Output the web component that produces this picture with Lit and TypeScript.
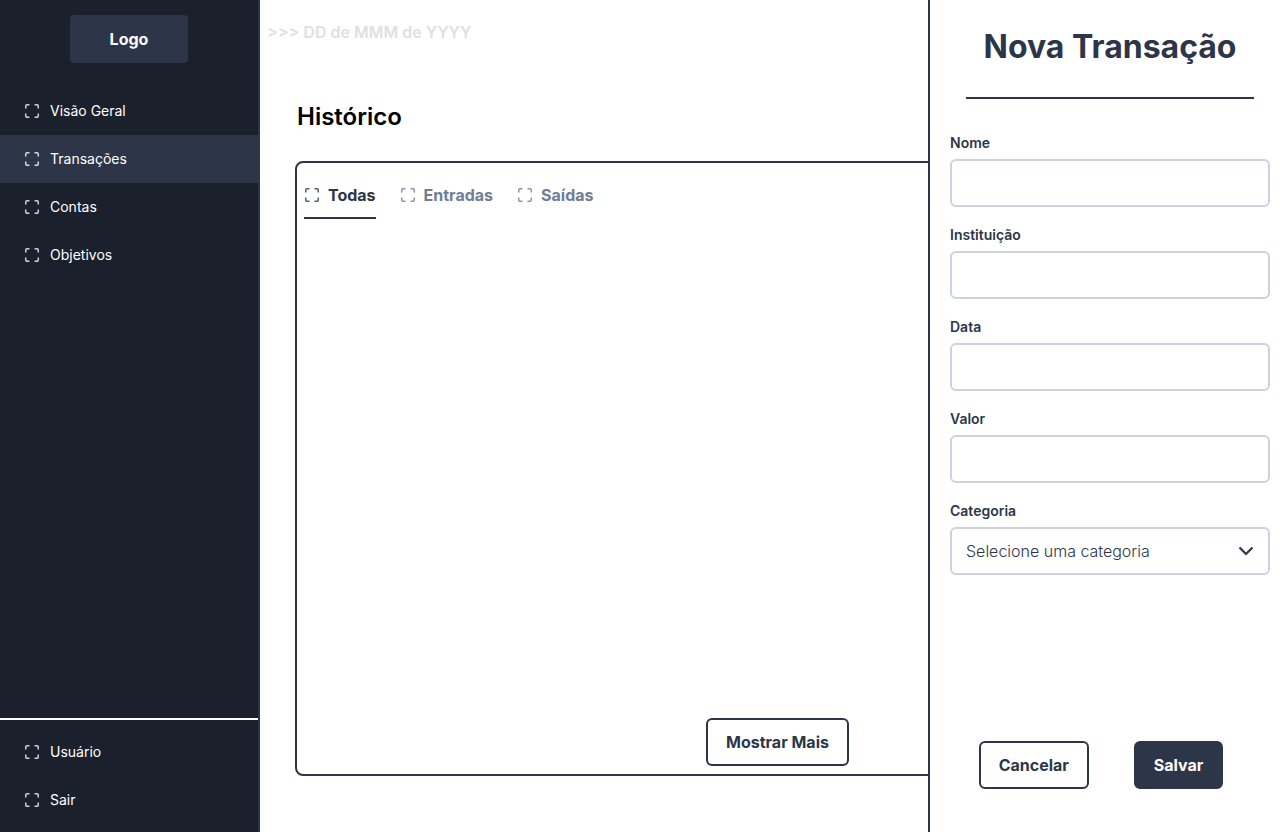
import { LitElement, html, css, svg } from "lit";
import { customElement, state } from "lit/decorators.js";
import { classMap } from "lit/directives/class-map.js";

const cornersIcon = html`
  <svg class="icon" viewBox="0 0 16 16" fill="none" stroke="currentColor" stroke-width="1.5" aria-hidden="true">
    ${svg`<path d="M1.75 5.5V3a1.25 1.25 0 0 1 1.25-1.25h2.5M10.5 1.75H13A1.25 1.25 0 0 1 14.25 3v2.5M14.25 10.5V13A1.25 1.25 0 0 1 13 14.25h-2.5M5.5 14.25H3A1.25 1.25 0 0 1 1.75 13v-2.5" />`}
  </svg>
`;

const FIELDS = [
  { id: "nome", label: "Nome" },
  { id: "instituicao", label: "Instituição" },
  { id: "data", label: "Data" },
  { id: "valor", label: "Valor" },
];

@customElement("app-root")
export class AppRoot extends LitElement {
  static styles = css`
    :host {
      display: block;
      font-family: Inter, "Liberation Sans", sans-serif;
      font-size: 16px;
      line-height: 24px;
      color: #2d3648;
    }
    * {
      box-sizing: border-box;
      margin: 0;
    }
    .layout {
      position: relative;
      display: grid;
      grid-template-columns: 260px minmax(0, 1fr);
      min-height: 100vh;
      background: #fff;
      overflow: hidden;
    }
    .sidebar {
      display: flex;
      flex-direction: column;
      padding-top: 15px;
      background: #1a202c;
      border-right: 2px solid #2d3648;
    }
    .logo {
      align-self: center;
      padding: 12px 40px;
      border-radius: 4px;
      background: #2d3648;
      color: #fff;
      font-weight: 700;
      text-decoration: none;
    }
    .nav {
      display: flex;
      flex-direction: column;
      margin-top: 24px;
    }
    .nav-bottom {
      margin-top: auto;
      padding: 8px 0;
      border-top: 2px solid #fff;
    }
    .nav-link {
      display: flex;
      align-items: center;
      gap: 10px;
      height: 48px;
      padding: 0 24px;
      color: #fff;
      font-size: 14px;
      line-height: 20px;
      font-weight: 400;
      text-decoration: none;
    }
    .nav-link.active {
      background: #2d3648;
    }
    .icon {
      flex: none;
      width: 16px;
      height: 16px;
      opacity: 0.8;
    }
    .main {
      display: flex;
      flex-direction: column;
      padding: 20px 20px 56px 7px;
    }
    .date {
      color: #e0e0e0;
      font-weight: 600;
    }
    .title {
      margin: 57px 0 28px 30px;
      color: #000;
      font-size: 24px;
      line-height: 32px;
      font-weight: 600;
    }
    .panel {
      flex: 1;
      display: flex;
      flex-direction: column;
      justify-content: space-between;
      margin-left: 28px;
      padding: 8px 7px;
      border: 2px solid #2d3648;
      border-radius: 8px;
    }
    .tabs {
      display: flex;
      gap: 24px;
    }
    .tab {
      display: flex;
      align-items: center;
      gap: 8px;
      height: 48px;
      padding: 0;
      border: 0;
      border-top: 2px solid transparent;
      border-bottom: 2px solid transparent;
      background: none;
      color: #717d96;
      font: inherit;
      font-weight: 700;
      cursor: pointer;
    }
    .tab.active {
      border-bottom-color: #2d3648;
      color: #2d3648;
    }
    .button {
      height: 48px;
      padding: 0 18px;
      border: 2px solid #2d3648;
      border-radius: 6px;
      background: #fff;
      color: #2d3648;
      font: inherit;
      font-weight: 700;
      cursor: pointer;
    }
    .button.primary {
      background: #2d3648;
      color: #fff;
    }
    .more {
      align-self: center;
    }
    .drawer {
      position: absolute;
      top: 0;
      right: 0;
      bottom: 0;
      width: 352px;
      display: flex;
      flex-direction: column;
      padding: 27px 10px 43px 20px;
      background: #fff;
      border-left: 2px solid #2d3648;
    }
    .drawer-title {
      margin: 0 16px;
      padding-bottom: 30px;
      border-bottom: 2px solid #2d3648;
      font-size: 32px;
      line-height: 40px;
      font-weight: 700;
      text-align: center;
    }
    .form {
      flex: 1;
      display: flex;
      flex-direction: column;
      gap: 18px;
      padding-top: 34px;
    }
    .field {
      display: flex;
      flex-direction: column;
      gap: 6px;
    }
    .label {
      font-size: 14px;
      line-height: 20px;
      font-weight: 600;
    }
    .select-wrap {
      display: grid;
      align-items: center;
    }
    .control {
      width: 100%;
      height: 48px;
      padding: 0 14px;
      border: 2px solid #cbd2e0;
      border-radius: 6px;
      background: #fff;
      color: #2d3648;
      font: inherit;
      font-weight: 300;
    }
    .select {
      grid-area: 1 / 1;
      appearance: none;
    }
    .chevron {
      grid-area: 1 / 1;
      justify-self: end;
      width: 16px;
      height: 16px;
      margin-right: 16px;
      pointer-events: none;
    }
    .actions {
      display: flex;
      justify-content: center;
      gap: 45px;
      margin-top: auto;
      padding-right: 18px;
    }
  `;

  @state() private page = "Transações";
  @state() private tab = "Todas";

  private navLink(name: string) {
    const active = this.page === name;
    return html`<a
      class=${classMap({ "nav-link": true, active })}
      href="#"
      @click=${(e: Event) => {
        e.preventDefault();
        this.page = name;
      }}
      >${cornersIcon}${name}</a
    >`;
  }

  private tabButton(name: string) {
    const active = this.tab === name;
    return html`<button
      class=${classMap({ tab: true, active })}
      type="button"
      role="tab"
      aria-selected=${active ? "true" : "false"}
      @click=${() => (this.tab = name)}
    >
      ${cornersIcon}${name}
    </button>`;
  }

  render() {
    return html`
      <div class="layout">
        <aside class="sidebar">
          <a class="logo" href="#">Logo</a>
          <nav class="nav">
            ${["Visão Geral", "Transações", "Contas", "Objetivos"].map((n) => this.navLink(n))}
          </nav>
          <nav class="nav nav-bottom">${["Usuário", "Sair"].map((n) => this.navLink(n))}</nav>
        </aside>

        <main class="main">
          <p class="date">&gt;&gt;&gt; DD de MMM de YYYY</p>
          <h1 class="title">Histórico</h1>
          <section class="panel">
            <div class="tabs" role="tablist">
              ${["Todas", "Entradas", "Saídas"].map((n) => this.tabButton(n))}
            </div>
            <button class="button more" type="button">Mostrar Mais</button>
          </section>
        </main>

        <aside class="drawer">
          <h2 class="drawer-title">Nova Transação</h2>
          <form class="form" @submit=${(e: Event) => e.preventDefault()}>
            ${FIELDS.map(
              (f) => html`<div class="field">
                <label class="label" for=${f.id}>${f.label}</label>
                <input class="control" id=${f.id} name=${f.id} type="text" />
              </div>`
            )}
            <div class="field">
              <label class="label" for="categoria">Categoria</label>
              <div class="select-wrap">
                <select class="control select" id="categoria" name="categoria">
                  <option>Selecione uma categoria</option>
                </select>
                <svg
                  class="chevron"
                  viewBox="0 0 16 16"
                  fill="none"
                  stroke="currentColor"
                  stroke-width="2.2"
                  aria-hidden="true"
                >
                  <path d="M1.5 4.5L8 11l6.500-6.500" />
                </svg>
              </div>
            </div>
            <div class="actions">
              <button class="button" type="button">Cancelar</button>
              <button class="button primary" type="submit">Salvar</button>
            </div>
          </form>
        </aside>
      </div>
    `;
  }
}
